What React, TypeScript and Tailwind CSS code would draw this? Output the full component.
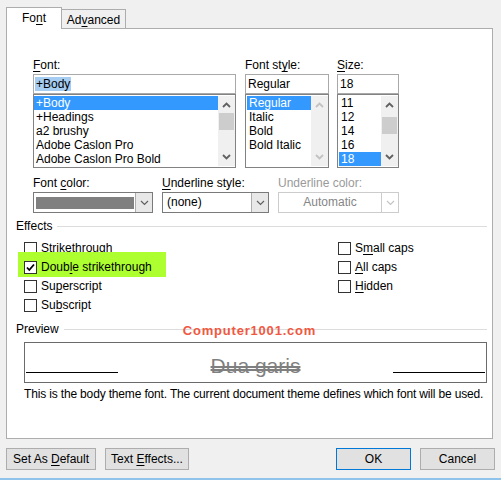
import type { ReactNode } from "react";

function K({ children }: { children: ReactNode }) {
  return <span className="underline underline-offset-[2px] decoration-[1px]">{children}</span>;
}

function Chevron({ up = false, color = "#606060", thick = false }: { up?: boolean; color?: string; thick?: boolean }) {
  return (
    <svg width="9" height="6" viewBox="0 0 9 6" className="block">
      <path
        d={up ? "M1 5 L4.5 1.5 L8 5" : "M1 1 L4.5 4.5 L8 1"}
        stroke={color}
        strokeWidth={thick ? 1.8 : 1.2}
        fill="none"
      />
    </svg>
  );
}

function ScrollBar({ thumbTop, disabled = false }: { thumbTop?: number; disabled?: boolean }) {
  const c = disabled ? "#c2c2c2" : "#606060";
  return (
    <div className="relative flex h-full w-[17px] shrink-0 flex-col items-center justify-between bg-[#f0f0f0] py-[6px]">
      <Chevron up color={c} thick />
      {thumbTop !== undefined && (
        <div className="absolute left-[1px] h-[17px] w-[15px] bg-[#cdcdcd]" style={{ top: thumbTop }} />
      )}
      <Chevron color={c} thick />
    </div>
  );
}

function Field({
  label,
  value,
  items,
  selected,
  width,
  thumbTop,
  disabled,
  padLeft,
  valueSelected,
}: {
  label: ReactNode;
  value: string;
  items: string[];
  selected: number;
  width: string;
  thumbTop?: number;
  disabled?: boolean;
  padLeft?: boolean;
  valueSelected?: boolean;
}) {
  return (
    <div className={`flex flex-col ${width}`}>
      <div className="mb-[1px] h-[15px] leading-[15px]">{label}</div>
      <div className="flex h-[20px] items-center border border-[#a9a9a9] pl-[1px]">
        <span className={`px-[1px] leading-[14px] ${valueSelected ? "bg-[#a5ccf1]" : ""}`}>{value}</span>
      </div>
      <div className="flex h-[74px] border border-[#828282] py-[1px]">
        <div className={`flex min-w-0 flex-1 flex-col ${padLeft ? "pl-[1px]" : ""}`}>
          {items.map((it, i) => (
            <div
              key={it}
              className={`h-[14px] whitespace-nowrap pl-[2px] leading-[14px] ${
                i === selected ? "bg-[#3399ff] text-white" : ""
              }`}
            >
              {it}
            </div>
          ))}
        </div>
        <ScrollBar thumbTop={thumbTop} disabled={disabled} />
      </div>
    </div>
  );
}

function Dropdown({ width, disabled = false, children }: { width: string; disabled?: boolean; children: ReactNode }) {
  return (
    <div className={`flex h-[21px] border bg-white ${width} ${disabled ? "border-[#cccccc]" : "border-[#7a7a7a]"}`}>
      <div className="flex min-w-0 flex-1 items-center">{children}</div>
      <div
        className={`flex w-[17px] items-center justify-center border-l ${
          disabled ? "border-[#cccccc] bg-white" : "border-[#adadad] bg-[#e8e8e8]"
        }`}
      >
        <Chevron color={disabled ? "#c4c4c4" : "#606060"} />
      </div>
    </div>
  );
}

function Check({ checked = false, children }: { checked?: boolean; children: ReactNode }) {
  return (
    <div className="flex h-[19px] items-center gap-[4px]">
      <div className="flex h-[13px] w-[13px] items-center justify-center border border-[#333333] bg-white">
        {checked && (
          <svg width="11" height="11" viewBox="0 0 11 11">
            <path d="M2 5.5 L4.3 8 L9 2.5" stroke="#000" strokeWidth="1.8" fill="none" />
          </svg>
        )}
      </div>
      <span className="leading-[15px]">{children}</span>
    </div>
  );
}

function GroupHeader({ title }: { title: string }) {
  return (
    <div className="flex h-[15px] items-center pl-[9px] pr-[5px]">
      <span className="leading-[15px]">{title}</span>
      <div className="ml-[5px] h-px flex-1 bg-[#dcdcdc]" />
    </div>
  );
}

export default function App() {
  return (
    <div className="relative h-[480px] w-[501px] overflow-hidden bg-[#f0f0f0] font-['Liberation_Sans',Arial,sans-serif] text-[12px] text-black">
      {/* tabs */}
      <div className="flex h-[29px] items-end pl-[6px] pt-[7px]">
        <div className="relative z-10 flex h-[22px] w-[56px] items-start justify-center border border-b-0 border-[#adadad] bg-white pt-[3px] leading-[15px]">
          <span>
            Fo<K>n</K>t
          </span>
        </div>
        <div className="ml-[-1px] flex h-[20px] w-[65px] items-start justify-center border border-b-0 border-[#adadad] bg-[#f0f0f0] pt-[3px] leading-[15px]">
          <span>
            Ad<K>v</K>anced
          </span>
        </div>
      </div>

      {/* panel */}
      <div className="relative mt-[-1px] ml-[6px] h-[411px] w-[487px] border border-[#adadad] bg-white">
        <div className="flex pl-[26px] pt-[29px]">
          <Field
            label={
              <>
                <K>F</K>ont:
              </>
            }
            value="+Body"
            valueSelected
            items={["+Body", "+Headings", "a2 brushy", "Adobe Caslon Pro", "Adobe Caslon Pro Bold"]}
            selected={0}
            width="w-[203px]"
            thumbTop={17}
          />
          <div className="ml-[9px]">
            <Field
              label={
                <>
                  Font st<K>y</K>le:
                </>
              }
              value="Regular"
              items={["Regular", "Italic", "Bold", "Bold Italic"]}
              selected={0}
              width="w-[84px]"
              disabled
              padLeft
            />
          </div>
          <div className="ml-[8px]">
            <Field
              label={
                <>
                  <K>S</K>ize:
                </>
              }
              value="18"
              items={["11", "12", "14", "16", "18"]}
              selected={4}
              width="w-[62px]"
              thumbTop={21}
              padLeft
            />
          </div>
        </div>

        {/* dropdown row */}
        <div className="mt-[8px] flex pl-[26px]">
          <div className="flex flex-col">
            <div className="mb-[1px] h-[15px] leading-[15px]">
              Font <K>c</K>olor:
            </div>
            <Dropdown width="w-[120px]">
              <div className="ml-[2px] h-[12px] w-[98px] bg-[#808080]" />
            </Dropdown>
          </div>
          <div className="ml-[9px] flex flex-col">
            <div className="mb-[1px] h-[15px] leading-[15px]">
              <K>U</K>nderline style:
            </div>
            <Dropdown width="w-[107px]">
              <span className="pl-[4px] leading-[15px]">(none)</span>
            </Dropdown>
          </div>
          <div className="ml-[9px] flex flex-col">
            <div className="mb-[1px] h-[15px] leading-[15px] text-[#9a9a9a]">Underline color:</div>
            <Dropdown width="w-[121px]" disabled>
              <span className="w-full text-center leading-[15px] text-[#858585]">Automatic</span>
            </Dropdown>
          </div>
        </div>

        {/* effects */}
        <div className="mt-[6px]">
          <GroupHeader title="Effects" />
        </div>
        <div className="mt-[5px] flex pl-[17px]">
          <div className="flex w-[314px] flex-col">
            <Check>
              Stri<K>k</K>ethrough
            </Check>
            <div className="relative">
              <div className="absolute -top-[6px] -left-[6px] h-[25px] w-[148px] bg-[#adff2f]" />
              <div className="relative">
                <Check checked>
                  Doub<K>l</K>e strikethrough
                </Check>
              </div>
            </div>
            <Check>
              Su<K>p</K>erscript
            </Check>
            <Check>
              Su<K>b</K>script
            </Check>
          </div>
          <div className="flex flex-col">
            <Check>
              S<K>m</K>all caps
            </Check>
            <Check>
              <K>A</K>ll caps
            </Check>
            <Check>
              <K>H</K>idden
            </Check>
          </div>
        </div>

        {/* preview */}
        <div className="relative mt-[7px]">
          <GroupHeader title="Preview" />
          <div className="absolute inset-x-0 top-[2px] text-center text-[13px] leading-[14px] font-bold tracking-[0.8px] text-[#f0583f]">
            Computer1001.com
          </div>
        </div>
        <div className="mt-[5px] ml-[17px] flex h-[41px] w-[463px] items-end justify-between border border-[#6b6b6b] px-[1px] pb-[9px]">
          <div className="h-px w-[92px] bg-black" />
          <span className="mb-[-3px] text-[21px] leading-[21px] text-[#7f7f7f] line-through decoration-double decoration-[1.5px]">
            Dua garis
          </span>
          <div className="h-px w-[92px] bg-black" />
        </div>
        <div className="mt-[4px] pl-[17px] leading-[15px] tracking-[-0.16px] whitespace-nowrap">
          This is the body theme font. The current document theme defines which font will be used.
        </div>
      </div>

      {/* buttons */}
      <div className="mt-[9px] flex px-[6px]">
        <button className="h-[22px] w-[90px] border border-[#adadad] bg-[#e1e1e1] leading-[15px]">
          Set As <K>D</K>efault
        </button>
        <button className="ml-[9px] h-[22px] w-[84px] border border-[#adadad] bg-[#e1e1e1] leading-[15px]">
          Text <K>E</K>ffects...
        </button>
        <button className="ml-auto h-[22px] w-[75px] border border-[#0078d7] bg-[#e1e1e1] leading-[15px]">OK</button>
        <button className="ml-[9px] h-[22px] w-[75px] border border-[#adadad] bg-[#e1e1e1] leading-[15px]">
          Cancel
        </button>
      </div>
      <div className="mt-[8px] h-[2px] bg-[#8fc3ec]" />
    </div>
  );
}
